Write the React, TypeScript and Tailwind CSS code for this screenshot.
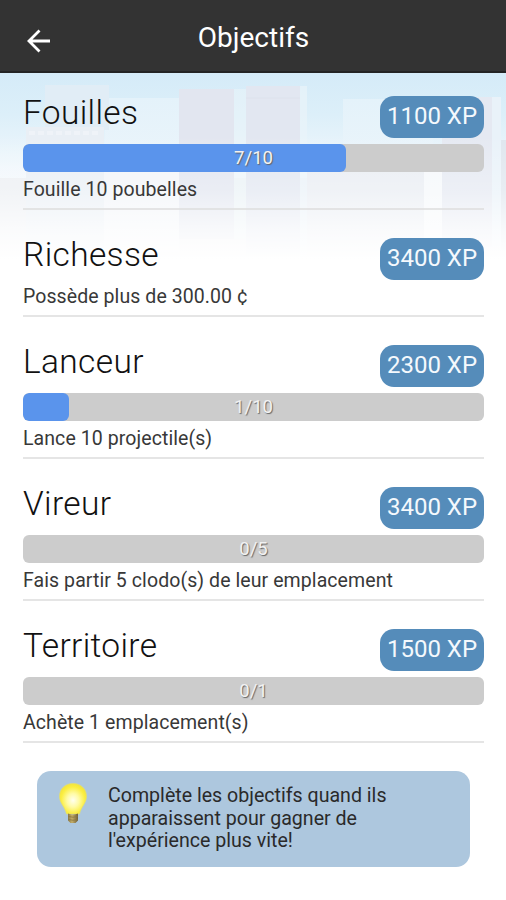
interface Goal {
  title: string;
  xp: string;
  text: string;
  value?: number;
  max?: number;
}

const goals: Goal[] = [
  { title: 'Fouilles', xp: '1100 XP', text: 'Fouille 10 poubelles', value: 7, max: 10 },
  { title: 'Richesse', xp: '3400 XP', text: 'Possède plus de 300.00 ¢' },
  { title: 'Lanceur', xp: '2300 XP', text: 'Lance 10 projectile(s)', value: 1, max: 10 },
  { title: 'Vireur', xp: '3400 XP', text: 'Fais partir 5 clodo(s) de leur emplacement', value: 0, max: 5 },
  { title: 'Territoire', xp: '1500 XP', text: 'Achète 1 emplacement(s)', value: 0, max: 1 },
];

function Skyline() {
  return (
    <svg className="absolute left-0 top-[73px]" width="506" height="187" viewBox="0 73 506 187" aria-hidden="true">
      <defs>
        <linearGradient id="sky" x1="0" y1="0" x2="0" y2="1">
          <stop offset="0" stopColor="#d5ebf8" />
          <stop offset="0.22" stopColor="#dceff9" />
          <stop offset="0.5" stopColor="#f0f7fc" />
          <stop offset="0.75" stopColor="#f7f9fc" />
          <stop offset="1" stopColor="#ffffff" />
        </linearGradient>
        <linearGradient id="cloud" x1="0" y1="0" x2="0" y2="1">
          <stop offset="0" stopColor="#e4f2fa" />
          <stop offset="1" stopColor="#f3f8fc" />
        </linearGradient>
        <linearGradient id="fade" x1="0" y1="0" x2="0" y2="1">
          <stop offset="0" stopColor="#fff" stopOpacity="0" />
          <stop offset="0.45" stopColor="#fff" stopOpacity="0.3" />
          <stop offset="0.75" stopColor="#fff" stopOpacity="0.75" />
          <stop offset="1" stopColor="#fff" />
        </linearGradient>
      </defs>
      <rect y="73" width="506" height="187" fill="url(#sky)" />
      <rect x="105" y="98" width="75" height="150" fill="url(#cloud)" />
      <rect x="343" y="99" width="90" height="150" fill="url(#cloud)" />
      <rect x="45" y="85" width="64" height="45" fill="#e1edf6" />
      <rect y="178" width="506" height="82" fill="#eceff3" />
      <rect x="26" y="127" width="78" height="120" fill="#e9eff5" />
      <path d="M29 133h70" stroke="#eff3f8" strokeWidth="4" strokeDasharray="6 3" />
      <rect x="104" y="172" width="75" height="80" fill="#f2f5f9" />
      <rect x="179" y="89" width="55" height="150" fill="#e2e6f0" />
      <rect x="234" y="89" width="12" height="150" fill="#eaf3f9" fillOpacity="0.6" />
      <rect x="246" y="86" width="54" height="170" fill="#e2e7f1" />
      <rect x="300" y="86" width="7" height="170" fill="#eaf3f9" fillOpacity="0.7" />
      <path d="M246 98h54" stroke="#dde2ec" />
      <rect x="307" y="172" width="117" height="80" fill="#e9edf3" />
      <rect x="424" y="172" width="18" height="80" fill="#f5f8fb" />
      <rect x="442" y="97" width="50" height="150" fill="#e5e9f2" />
      <rect x="492" y="97" width="9" height="150" fill="#e9f2f9" />
      <rect x="501" y="140" width="5" height="110" fill="#dfe6ee" />
      <rect y="135" width="506" height="125" fill="url(#fade)" />
    </svg>
  );
}

function Bulb() {
  return (
    <svg width="34" height="44" viewBox="0 0 34 44" aria-hidden="true">
      <defs>
        <radialGradient id="glow" cx="0.5" cy="0.55" r="0.55">
          <stop offset="0" stopColor="#fffff0" />
          <stop offset="0.4" stopColor="#fffba6" />
          <stop offset="0.8" stopColor="#fbee40" />
          <stop offset="1" stopColor="#f2e43c" />
        </radialGradient>
        <linearGradient id="base">
          <stop offset="0" stopColor="#8b7843" />
          <stop offset="0.4" stopColor="#c3ad68" />
          <stop offset="1" stopColor="#716038" />
        </linearGradient>
      </defs>
      <path d="M17 1.500C9 1.500 3.500 7 3.500 14.500C3.500 21 9 25 10.500 32H23.500C25 25 30.500 21 30.500 14.500C30.500 7 25 1.500 17 1.500Z" fill="url(#glow)" stroke="#e4df70" strokeWidth="0.700" />
      <path d="M12 31.500q5 2 10 0v7l-2.500 2.500h-5l-2.500-2.500z" fill="url(#base)" />
      <path d="M12.500 34.500q4.500 1.500 9 0M12.500 37.500q4.500 1.500 9 0" fill="none" stroke="#897641" strokeWidth="0.800" />
    </svg>
  );
}

function GoalRow({ goal }: { goal: Goal }) {
  const hasBar = goal.max !== undefined;
  return (
    <section className={hasBar ? 'mb-7' : '-mt-px mb-7 pt-px'}>
      <div className="flex h-[42px] items-start justify-between">
        <h2 className="text-[33.500px] font-[350] leading-[33px] tracking-[0.350px] text-[#111]">{goal.title}</h2>
        <span className="flex h-[42px] w-[104px] items-center justify-center rounded-[14px] bg-[#558cba] pb-0.5 text-[24px] leading-none text-[#f4f9fd]">
          {goal.xp}
        </span>
      </div>
      {goal.max !== undefined && (
        <div className="relative mt-[6px] h-7 overflow-hidden rounded-[6px] bg-[#ccc]">
          <div
            className="h-full rounded-[6px] bg-[#5a94ec]"
            style={{ width: `${((goal.value ?? 0) / goal.max) * 100}%` }}
          />
          <span className="absolute inset-0 flex items-center justify-center text-[18.500px] leading-none text-[#f2f2f2] [text-shadow:1px_1px_1px_#666]">
            {goal.value}/{goal.max}
          </span>
        </div>
      )}
      <p
        className={`flex items-center whitespace-nowrap border-b-2 border-[#dedede]/80 text-[19.500px] leading-none tracking-[0.080px] text-[#383838] ${hasBar ? 'h-[38px]' : 'h-[37px] pb-px'}`}
      >
        {goal.text}
      </p>
    </section>
  );
}

export default function App() {
  return (
    <div className="relative h-[900px] w-[506px] overflow-hidden bg-white font-['Roboto',sans-serif]">
      <Skyline />
      <header className="relative flex h-[73px] items-center justify-center border-b-2 border-[#242424] bg-[#333]">
        <svg className="absolute left-[26px] top-[29px]" width="25" height="24" viewBox="0 0 25 24" fill="none" stroke="#fff" strokeWidth="2.800">
          <path d="M24 12H3M13.500 1.500L3 12L13.500 22.500" />
        </svg>
        <h1 className="pl-px pt-1 text-[28px] leading-none text-white">Objectifs</h1>
      </header>
      <main className="relative pl-[23px] pr-[22px] pt-[23px]">
        {goals.map((goal) => (
          <GoalRow key={goal.title} goal={goal} />
        ))}
        <aside className="mx-[14px] flex h-24 rounded-[14px] bg-[#adc7de] pl-[19px] pt-[11px]">
          <Bulb />
          <p className="ml-[18px] mt-[3px] text-[19.600px] leading-[22.500px] text-[#2a2a2a]">
            Complète les objectifs quand ils
            <br />
            apparaissent pour gagner de
            <br />
            l'expérience plus vite!
          </p>
        </aside>
      </main>
    </div>
  );
}
